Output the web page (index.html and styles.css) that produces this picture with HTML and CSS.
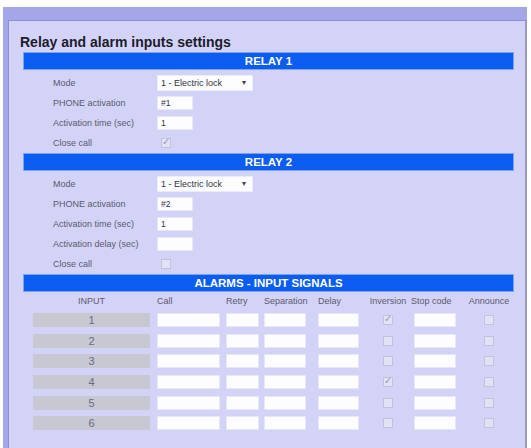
FILE: index.html
```html
<!DOCTYPE html>
<html lang="en">
<head>
  <meta charset="UTF-8">
  <title>Relay and alarm inputs settings</title>
  <link rel="stylesheet" href="styles.css">
</head>
<body>
  <div class="window">
    <div class="panel">
      <h2>Relay and alarm inputs settings</h2>

      <div class="bar">RELAY 1</div>
      <div class="rows">
        <div class="row"><label>Mode</label><span class="select"><select><option>1 - Electric lock</option></select></span></div>
        <div class="row"><label>PHONE activation</label><input type="text" class="short" value="#1"></div>
        <div class="row"><label>Activation time (sec)</label><input type="text" class="short" value="1"></div>
        <div class="row"><label>Close call</label><input type="checkbox" class="check" checked></div>
      </div>

      <div class="bar">RELAY 2</div>
      <div class="rows">
        <div class="row"><label>Mode</label><span class="select"><select><option>1 - Electric lock</option></select></span></div>
        <div class="row"><label>PHONE activation</label><input type="text" class="short" value="#2"></div>
        <div class="row"><label>Activation time (sec)</label><input type="text" class="short" value="1"></div>
        <div class="row"><label>Activation delay (sec)</label><input type="text" class="short" value=""></div>
        <div class="row"><label>Close call</label><input type="checkbox" class="check"></div>
      </div>

      <div class="bar">ALARMS - INPUT SIGNALS</div>
      <div class="alarms">
        <div class="th center-first">INPUT</div>
        <div class="th">Call</div>
        <div class="th">Retry</div>
        <div class="th">Separation</div>
        <div class="th">Delay</div>
        <div class="th center">Inversion</div>
        <div class="th">Stop code</div>
        <div class="th center">Announce</div>

        <div class="num">1</div>
        <input type="text" class="c-call"><input type="text" class="c-retry"><input type="text" class="c-sep"><input type="text" class="c-delay">
        <div class="center"><input type="checkbox" class="check" checked></div>
        <input type="text" class="c-stop">
        <div class="center"><input type="checkbox" class="check"></div>

        <div class="num">2</div>
        <input type="text" class="c-call"><input type="text" class="c-retry"><input type="text" class="c-sep"><input type="text" class="c-delay">
        <div class="center"><input type="checkbox" class="check"></div>
        <input type="text" class="c-stop">
        <div class="center"><input type="checkbox" class="check"></div>

        <div class="num">3</div>
        <input type="text" class="c-call"><input type="text" class="c-retry"><input type="text" class="c-sep"><input type="text" class="c-delay">
        <div class="center"><input type="checkbox" class="check"></div>
        <input type="text" class="c-stop">
        <div class="center"><input type="checkbox" class="check"></div>

        <div class="num">4</div>
        <input type="text" class="c-call"><input type="text" class="c-retry"><input type="text" class="c-sep"><input type="text" class="c-delay">
        <div class="center"><input type="checkbox" class="check" checked></div>
        <input type="text" class="c-stop">
        <div class="center"><input type="checkbox" class="check"></div>

        <div class="num">5</div>
        <input type="text" class="c-call"><input type="text" class="c-retry"><input type="text" class="c-sep"><input type="text" class="c-delay">
        <div class="center"><input type="checkbox" class="check"></div>
        <input type="text" class="c-stop">
        <div class="center"><input type="checkbox" class="check"></div>

        <div class="num">6</div>
        <input type="text" class="c-call"><input type="text" class="c-retry"><input type="text" class="c-sep"><input type="text" class="c-delay">
        <div class="center"><input type="checkbox" class="check"></div>
        <input type="text" class="c-stop">
        <div class="center"><input type="checkbox" class="check"></div>
      </div>
    </div>
  </div>
</body>
</html>
```

FILE: styles.css
```css
body {
  margin: 0;
  background: #ffffff;
  font-family: "Liberation Sans", Arial, sans-serif;
}

.window {
  margin: 7px 4px 0 3px;
  min-height: calc(100vh - 7px);
  box-sizing: border-box;
  background: #a4a6e8;
  padding: 13px 0 0 5px;
  display: flex;
  flex-direction: column;
}

.panel {
  flex: 1;
  background: #d3d3f8;
  border-top: 1px solid #8c8ed2;
  border-left: 1px solid #8c8ed2;
  border-right: 2px solid #9a9ab6;
}

h2 {
  margin: 13px 0 3px 11px;
  font-size: 14px;
  line-height: 16px;
  font-weight: bold;
  color: #1c1c2c;
}

.bar {
  margin: 1px 12px 0 15px;
  height: 16px;
  line-height: 16px;
  background: #0b5cf0;
  box-shadow: 0 0 0 1px #7ea2f0;
  color: #ffffff;
  font-size: 11.5px;
  font-weight: bold;
  text-align: center;
}

.rows {
  padding: 4px 0 0 44px;
}

.row {
  display: flex;
  align-items: center;
  height: 20px;
}

.row label {
  width: 104px;
  font-size: 9px;
  color: #5a5a6c;
}

input[type="text"] {
  box-sizing: border-box;
  height: 14px;
  margin: 0;
  padding: 0 3px;
  border: 1px solid #e8e8f4;
  background: #fdfdff;
  font-family: "Liberation Sans", Arial, sans-serif;
  font-size: 8.5px;
  color: #33333f;
  outline: none;
}

.short {
  width: 36px;
}

.select {
  position: relative;
  display: flex;
  height: 16px;
}

.select select {
  appearance: none;
  box-sizing: border-box;
  width: 96px;
  height: 16px;
  margin: 0;
  padding: 0 3px;
  border: 1px solid #ececf6;
  background: #fdfdff;
  font-family: "Liberation Sans", Arial, sans-serif;
  font-size: 9px;
  color: #33333f;
}

.select::after {
  content: "\25BE";
  position: absolute;
  right: 7px;
  top: 4px;
  font-size: 8px;
  line-height: 8px;
  color: #44444f;
  pointer-events: none;
}

.check {
  appearance: none;
  box-sizing: border-box;
  width: 10px;
  height: 10px;
  margin: 0 0 0 4px;
  border: 1px solid #c2c2da;
  background: #e2e2f6;
  position: relative;
}

.check:checked::after {
  content: "\2713";
  position: absolute;
  left: 0;
  top: -3px;
  font-size: 10px;
  color: #9a9ab8;
}

.alarms {
  display: grid;
  grid-template-columns: 124px 69px 38px 54px 47px 46px 50px 56px;
  grid-template-rows: 19px;
  grid-auto-rows: 20.6px;
  align-items: center;
  margin-left: 24px;
}

.th {
  font-size: 9px;
  color: #5a5a6c;
}

.center-first {
  width: 117px;
  text-align: center;
}

.center {
  text-align: center;
  display: flex;
  justify-content: center;
}

.center .check {
  margin: 0;
}

.num {
  width: 117px;
  height: 14px;
  line-height: 14px;
  background: #c8c8d2;
  text-align: center;
  font-size: 11px;
  color: #6a6a7c;
}

.c-call { width: 63px; }
.c-retry { width: 33px; }
.c-sep { width: 42px; }
.c-delay { width: 41px; }
.c-stop { width: 42px; margin-left: 3px !important; }
```
